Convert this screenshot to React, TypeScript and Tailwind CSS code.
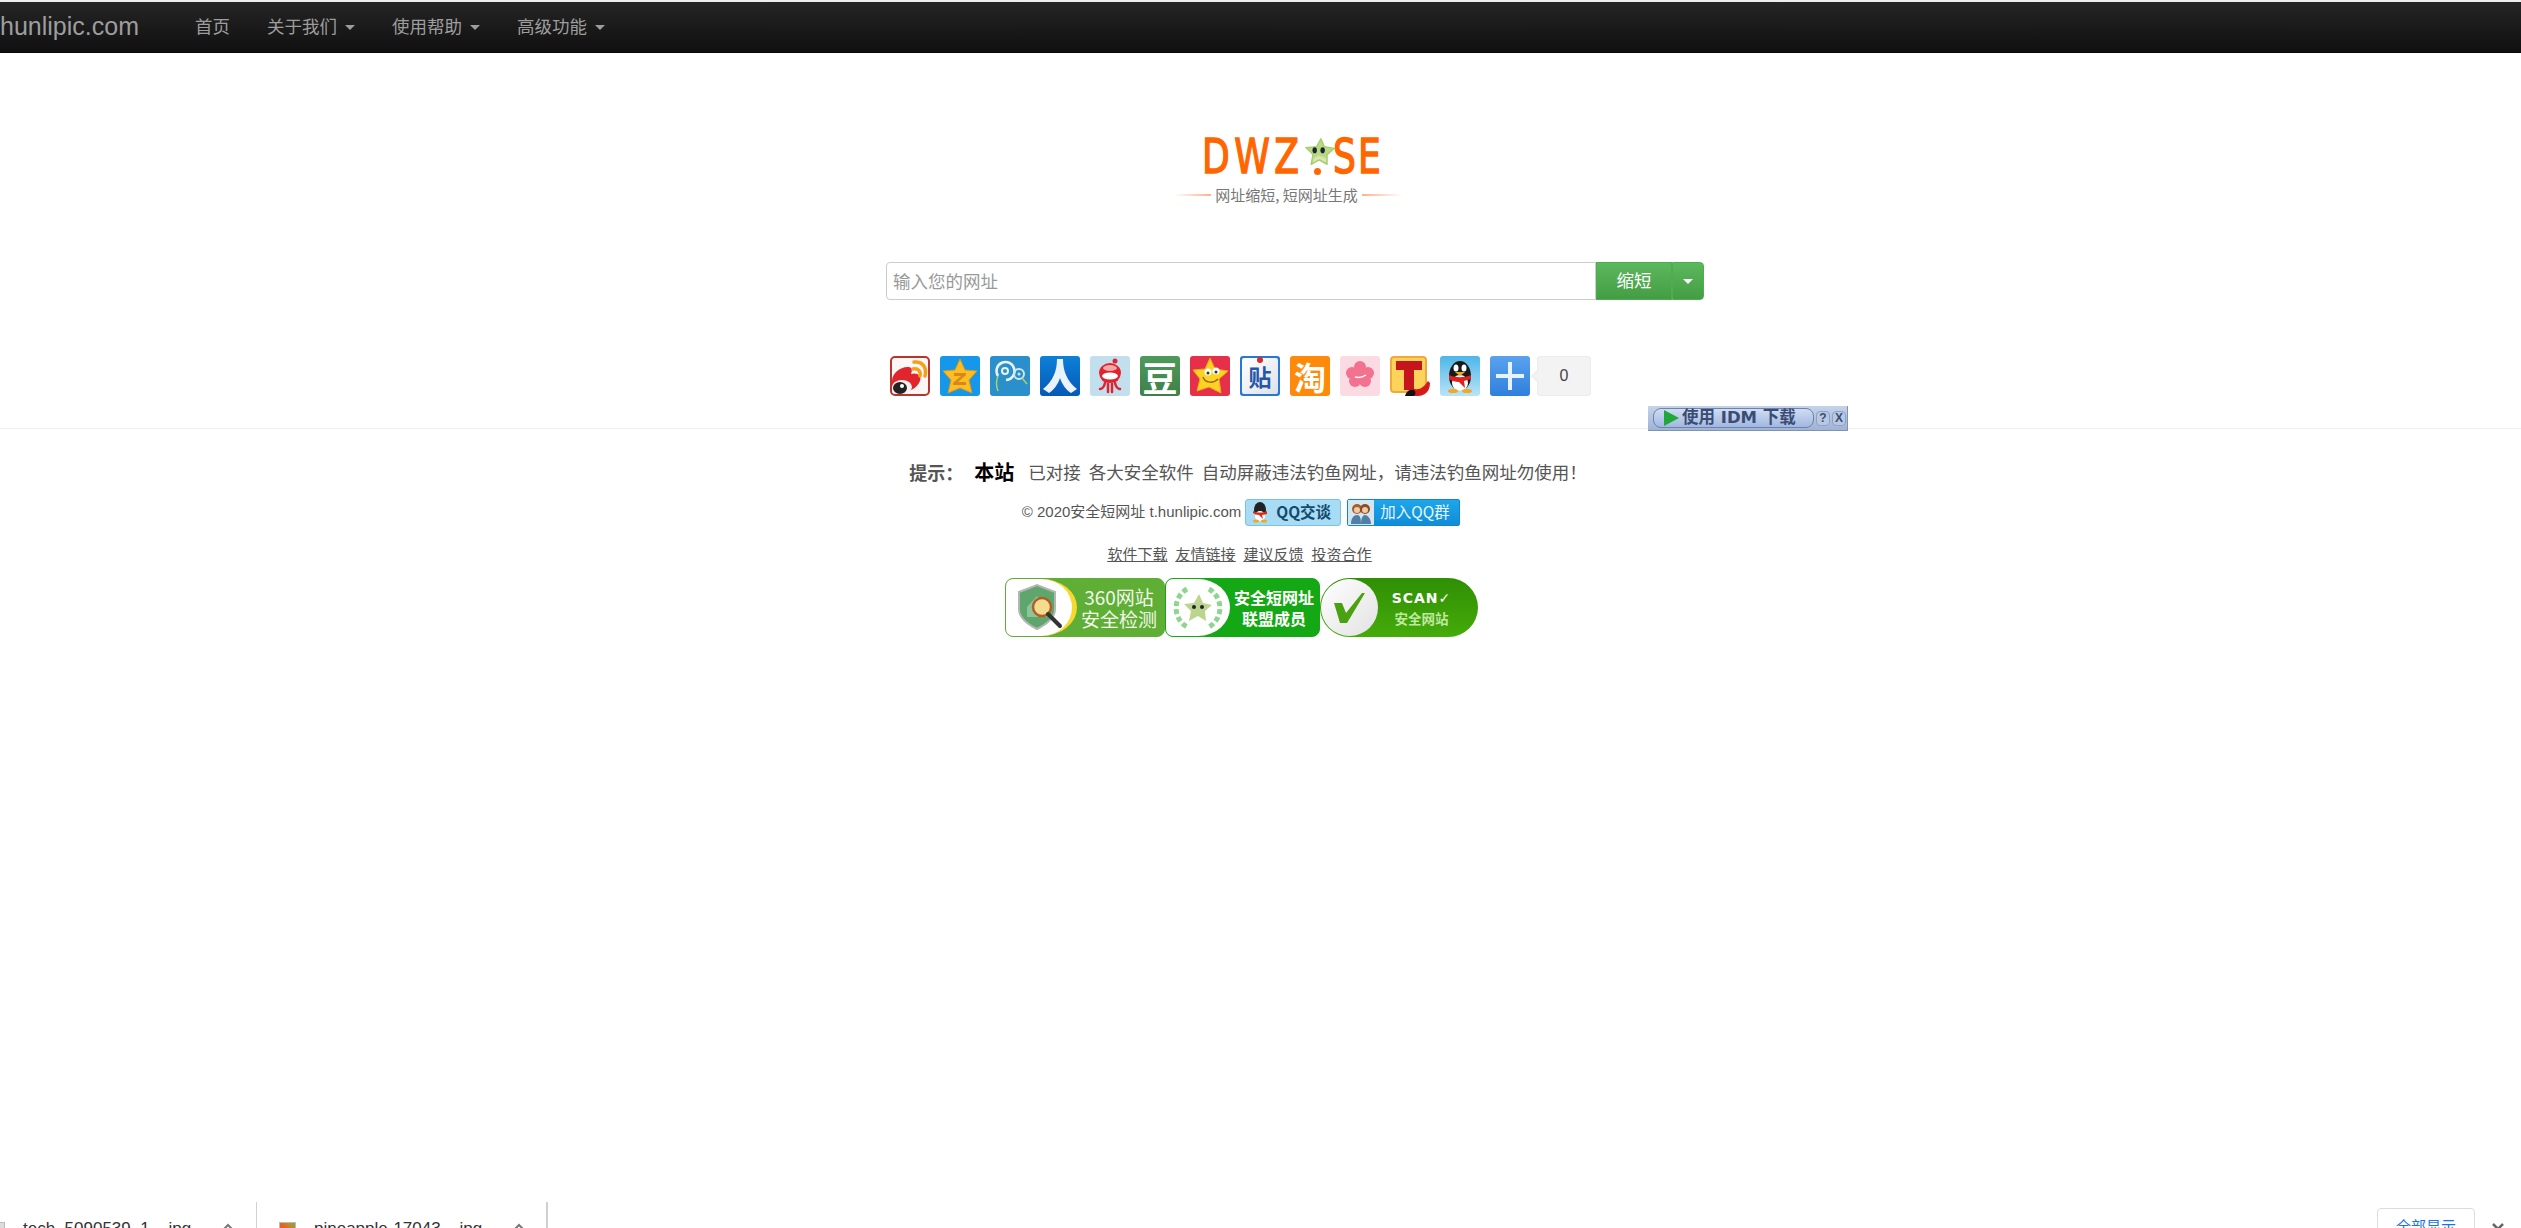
const cjk = '"Noto Sans CJK SC", "Liberation Sans", sans-serif';

const NavMenu = ({ label }: { label: string }) => (
  <a className="flex items-center text-[17.5px] text-[#9d9d9d]">
    {label}
    <span className="ml-2 w-0 h-0 border-x-[5px] border-t-[5px] border-x-transparent border-t-[#9d9d9d]" />
  </a>
);

const Star = ({ size = 30 }: { size?: number }) => (
  <svg width={size} height={size} viewBox="0 0 34 34">
    <path d="M18 2 L22 11 L33 13 L25 20 L25 31 L16 26 L7 31 L9 20 L1 12 L13 11 Z" fill="#b9d985" stroke="#a5cc6e" strokeLinejoin="round" strokeWidth="1.5" />
    <path d="M10 24 L16 21 L24 24 L24 29 L16 25 L9 29 Z" fill="#d6e8ad" />
    <ellipse cx="11" cy="15" rx="2.5" ry="3.5" fill="#1d2433" />
    <ellipse cx="20" cy="15" rx="2.5" ry="3.5" fill="#1d2433" />
  </svg>
);

const Logo = () => (
  <div className="ml-[288px] w-[229px] flex flex-col">
    <div
      className="ml-[28px] h-[38px] flex items-center text-[48px] leading-none text-[#ff6600] [-webkit-text-stroke:1.5px_#ff6600]"
      style={{ fontFamily: '"DejaVu Sans", sans-serif' }}
    >
      <span className="w-[103px] block origin-left scale-x-[0.75] tracking-[6px] whitespace-nowrap">DWZ</span>
      <span className="relative w-[28px] h-[38px] shrink-0">
        <span className="absolute bottom-0 left-[9px] w-[7px] h-[7px] rounded-full bg-[#ff6600]" />
        <span className="absolute top-0 left-0">
          <Star />
        </span>
      </span>
      <span className="w-[50px] block origin-left scale-x-[0.75] tracking-[3px] whitespace-nowrap">SE</span>
    </div>
    <div className="mt-[10px] flex items-center h-[20px] text-[15px] text-[#777]" style={{ fontFamily: cjk }}>
      <span className="w-[38px] h-[2px] bg-gradient-to-r from-white to-[#ffb08a]" />
      <span className="mx-[4px] whitespace-nowrap">网址缩短, 短网址生成</span>
      <span className="w-[42px] h-[2px] bg-gradient-to-l from-white to-[#ffb08a]" />
    </div>
  </div>
);

const Weibo = () => (
  <svg width="40" height="40" viewBox="0 0 40 40">
    <rect x="1" y="1" width="38" height="38" rx="4" fill="#fbf7f5" stroke="#b8352f" strokeWidth="2" />
    <path d="M2 25c0-8 9-15 17-14 4 1 3 4 2 7 6-2 11 2 9 7-3 8-13 12-20 11-5-1-9-5-8-11z" fill="#e0262c" />
    <ellipse cx="12" cy="31" rx="10" ry="7" fill="#f6f0ee" />
    <ellipse cx="10" cy="32" rx="7" ry="6" fill="#222" />
    <circle cx="12" cy="30" r="2" fill="#fff" />
    <path d="M23 13c5-1 8 2 7 7M24 6c9-1 13 6 11 14" fill="none" stroke="#f5a01d" strokeWidth="3.5" strokeLinecap="round" />
  </svg>
);

const QZone = () => (
  <svg width="40" height="40" viewBox="0 0 40 40">
    <rect width="40" height="40" rx="3" fill="#1597ea" />
    <path d="M20 3 L25 14 L37 15 L29 24 L32 37 L20 32 L8 37 L11 24 L3 15 L15 14 Z" fill="#fbbe23" stroke="#e0961a" strokeLinejoin="round" />
    <path d="M14 17h12v2l-8 7h8v3H13v-2l8-7h-7z" fill="#d9861d" />
  </svg>
);

const Tencent = () => (
  <svg width="40" height="40" viewBox="0 0 40 40">
    <rect width="40" height="40" rx="3" fill="#2b8fcb" />
    <path d="M8 20 A9 9 0 1 1 16 24" fill="none" stroke="#e7f3ee" strokeWidth="2.5" />
    <circle cx="15" cy="15" r="3" fill="none" stroke="#e7f3ee" strokeWidth="2" />
    <circle cx="29" cy="18" r="5" fill="none" stroke="#cfe7ef" strokeWidth="2" />
    <circle cx="29" cy="18" r="1.5" fill="#cfe7ef" />
    <path d="M8 20c-2 5-2 10 0 15M32 22l5 6" fill="none" stroke="#a6d36a" strokeWidth="1.5" />
  </svg>
);

const Renren = () => (
  <svg width="40" height="40" viewBox="0 0 40 40">
    <defs>
      <linearGradient id="rr" x1="0" y1="0" x2="0" y2="1">
        <stop offset="0" stopColor="#0d81d8" />
        <stop offset="1" stopColor="#0558b8" />
      </linearGradient>
    </defs>
    <rect width="40" height="40" rx="3" fill="url(#rr)" />
    <path d="M17 3h6c0 12 4 22 14 30l-6 4c-5-3-9-9-11-15-2 6-6 12-11 15l-6-4C13 25 17 15 17 3z" fill="#e9f3fb" />
  </svg>
);

const Kaixin = () => (
  <svg width="40" height="40" viewBox="0 0 40 40">
    <rect width="40" height="40" rx="3" fill="#c2dfee" />
    <path d="M9 17 A11 10 0 0 1 31 17 Q30 27 20 27 Q10 27 9 17Z" fill="#e0242f" />
    <ellipse cx="20" cy="12" rx="7" ry="3" fill="#f3a7a7" />
    <ellipse cx="20" cy="20" rx="8" ry="3.5" fill="#fff" />
    <path d="M15 27c-1 4-3 6-5 6M18 28v8M22 28v8M25 27c1 4 3 6 5 6" fill="none" stroke="#e0242f" strokeWidth="2.5" strokeLinecap="round" />
    <circle cx="25" cy="5" r="2.5" fill="#e0242f" />
  </svg>
);

const Douban = () => (
  <div className="w-10 h-10 rounded-[3px] bg-gradient-to-b from-[#4e9a5b] to-[#3f8049] flex items-center justify-center text-[35px] leading-none text-white font-bold" style={{ fontFamily: cjk }}>
    豆
  </div>
);

const Qing = () => (
  <svg width="40" height="40" viewBox="0 0 40 40">
    <rect width="40" height="40" rx="3" fill="#e6304a" />
    <path d="M20 2 L25 13 L38 15 L29 23 L31 37 L19 31 L7 35 L10 23 L3 14 L15 13 Z" fill="#fbd423" stroke="#f0a81c" strokeLinejoin="round" />
    <circle cx="18" cy="16" r="3.5" fill="#fff" />
    <circle cx="26" cy="15" r="3.5" fill="#fff" />
    <circle cx="18" cy="17" r="1.5" fill="#333" />
    <circle cx="26" cy="16" r="1.5" fill="#333" />
    <path d="M13 21c2 6 10 7 15 2" fill="none" stroke="#a5651a" strokeWidth="1.5" />
  </svg>
);

const Tieba = () => (
  <div className="relative w-10 h-10 rounded-[3px] bg-[#2777d5] p-[2px]">
    <div className="w-full h-full rounded-[2px] bg-gradient-to-br from-white to-[#dde1e8] flex items-center justify-center text-[23px] leading-none font-bold text-[#2656a8]" style={{ fontFamily: cjk }}>
      贴
    </div>
    <span className="absolute top-[1px] left-[17px] w-[6px] h-[6px] rounded-full bg-[#d92a2a]" />
  </div>
);

const Taobao = () => (
  <div className="w-10 h-10 rounded-[3px] bg-[#ff8a0a] flex items-center justify-center text-[32px] leading-none font-bold text-white" style={{ fontFamily: cjk }}>
    淘
  </div>
);

const Flower = () => (
  <svg width="40" height="40" viewBox="0 0 40 40">
    <rect width="40" height="40" rx="3" fill="#fbdbe3" />
    <g fill="#f2728f">
      <circle cx="20" cy="11" r="6" />
      <circle cx="12" cy="17" r="6" />
      <circle cx="28" cy="17" r="6" />
      <circle cx="15" cy="25" r="6" />
      <circle cx="25" cy="25" r="6" />
      <circle cx="20" cy="19" r="7" />
    </g>
    <path d="M15 21c4 1 8 0 11-2" fill="none" stroke="#fff" strokeWidth="1.5" />
  </svg>
);

const TQQ = () => (
  <svg width="40" height="40" viewBox="0 0 40 40">
    <rect x="1" y="1" width="35" height="35" rx="3" fill="#fcd35b" stroke="#f2a93b" strokeWidth="2" />
    <path d="M6 5h26v9h-8v20h-10V14H6z" fill="#c4161c" />
    <path d="M16 40c0-5 5-8 9-7 5 1 9-2 13-8l2 2c0 8-5 13-12 13z" fill="#d61a1a" />
    <path d="M15 40c1-4 5-7 9-6 2 2 2 4 0 6z" fill="#111" />
  </svg>
);

const QQ = () => (
  <svg width="40" height="40" viewBox="0 0 40 40">
    <defs>
      <linearGradient id="qq" x1="0" y1="0" x2="0" y2="1">
        <stop offset="0" stopColor="#4db6e8" />
        <stop offset="1" stopColor="#b9e4f7" />
      </linearGradient>
    </defs>
    <rect width="40" height="40" rx="3" fill="url(#qq)" />
    <ellipse cx="20" cy="20" rx="11" ry="15" fill="#1a1a1a" />
    <ellipse cx="20" cy="27" rx="8" ry="8" fill="#fff" />
    <ellipse cx="16" cy="12" rx="2.5" ry="3.5" fill="#fff" />
    <ellipse cx="24" cy="12" rx="2.5" ry="3.5" fill="#fff" />
    <path d="M15 16h10l-5 4z" fill="#f5a81c" />
    <path d="M9 19c7 3 15 3 22 0v4l-7 2 1 7-6-6c-4 0-8-2-10-3z" fill="#e0201c" />
    <ellipse cx="13" cy="35" rx="5" ry="2" fill="#f5a81c" />
    <ellipse cx="27" cy="35" rx="5" ry="2" fill="#f5a81c" />
  </svg>
);

const Plus = () => (
  <svg width="40" height="40" viewBox="0 0 40 40">
    <defs>
      <linearGradient id="pl" x1="0" y1="0" x2="0" y2="1">
        <stop offset="0" stopColor="#5aa2ee" />
        <stop offset="1" stopColor="#2f7fdc" />
      </linearGradient>
    </defs>
    <rect width="40" height="40" rx="3" fill="url(#pl)" />
    <path d="M18 6h4v12h12v4H22v12h-4V22H6v-4h12z" fill="#e8f2fb" />
  </svg>
);

const Counter = () => (
  <div className="relative ml-[7px] w-[54px] h-10 rounded-[3px] bg-[#f3f3f3] border border-[#ececec] flex items-center justify-center text-[16px] text-[#444]" style={{ fontFamily: '"Liberation Sans", sans-serif' }}>
    <span className="absolute -left-[5px] top-[15px] w-2 h-2 rotate-45 bg-[#f3f3f3] border-l border-b border-[#ececec]" />
    0
  </div>
);

const IdmBar = () => (
  <div className="absolute left-[1648px] top-[406px] w-[200px] h-[25px] bg-gradient-to-b from-[#c5d3ea] to-[#9fb3d6] border-b border-r border-[#7f93b5] flex items-center pl-[5px]">
    <div className="w-[161px] h-[20px] rounded-[8px] bg-gradient-to-b from-[#cfdcf2] to-[#a2b8e0] border border-[#6d82ad] flex items-center pl-[10px] gap-[3px] font-bold text-[#3a4c74] whitespace-nowrap" style={{ fontFamily: '"DejaVu Sans", "Noto Sans CJK SC", sans-serif' }}>
      <svg width="15" height="16" viewBox="0 0 15 16">
        <path d="M0 0 L15 8 L0 16 Z" fill="#22a83a" />
      </svg>
      <span className="text-[16.5px] leading-none">使用 IDM 下载</span>
    </div>
    <span className="ml-[2px] w-[14px] h-[15px] rounded-[4px] bg-[#b9c8e2] border border-[#8ea2c6] text-[12px] leading-[13px] text-center font-bold text-[#3a4c74]">?</span>
    <span className="ml-[2px] w-[14px] h-[15px] rounded-[4px] bg-[#b9c8e2] border border-[#8ea2c6] text-[12px] leading-[13px] text-center font-bold text-[#3a4c74]">X</span>
  </div>
);

const QQChat = () => (
  <div className="ml-[4px] w-[96px] h-[27px] rounded-[3px] bg-[#a8dcf5] border border-[#7cc2e6] flex items-center pl-[4px] gap-[6px] text-[15.5px] font-bold text-[#134a6e] whitespace-nowrap" style={{ fontFamily: cjk }}>
    <svg width="20" height="22" viewBox="0 0 20 22" className="shrink-0">
      <ellipse cx="10" cy="9" rx="6" ry="8" fill="#222" />
      <ellipse cx="10" cy="15" rx="5" ry="5" fill="#fff" />
      <path d="M3 10c4 2 10 2 14 0v3l-5 1 1 4-4-4c-2 0-4-1-6-2z" fill="#d92a1e" />
      <ellipse cx="6" cy="20" rx="3" ry="1.5" fill="#f5a81c" />
      <ellipse cx="14" cy="20" rx="3" ry="1.5" fill="#f5a81c" />
    </svg>
    QQ交谈
  </div>
);

const QQGroup = () => (
  <div className="ml-[6px] w-[113px] h-[27px] rounded-[2px] bg-gradient-to-b from-[#1ea6ea] to-[#0e8dd8] flex items-center text-[15.5px] text-[#e8f6ff] border border-[#1287cf] whitespace-nowrap" style={{ fontFamily: cjk }}>
    <span className="w-[26px] h-full shrink-0 bg-[#d5e6ef] flex items-center justify-center mr-[6px]">
      <svg width="22" height="24" viewBox="0 0 22 24">
        <circle cx="7" cy="9" r="5" fill="#a0612f" />
        <circle cx="15" cy="9" r="5" fill="#8a4d22" />
        <circle cx="7" cy="10" r="3" fill="#f3c9a5" />
        <circle cx="15" cy="10" r="3" fill="#f3c9a5" />
        <path d="M1 24c0-6 3-9 6-9s4 3 4 9zM11 24c0-6 2-9 4-9s6 3 6 9z" fill="#4f7fa8" />
      </svg>
    </span>
    加入QQ群
  </div>
);

const Badge360 = () => (
  <div className="w-[160px] h-[59px] rounded-[8px] bg-[#5fae35] border border-[#5fae35] flex items-center overflow-hidden" style={{ fontFamily: cjk }}>
    <div className="w-[71px] shrink-0 h-full bg-white rounded-r-[50%] border-r-[5px] border-[#f7d92e] flex items-center pl-[9px]">
      <svg width="50" height="50" viewBox="0 0 50 50">
        <path d="M4 9 L22 2 L40 9 V26 C40 36 30 42 22 46 C14 42 4 36 4 26 Z" fill="#5ea66b" stroke="#b5b5b5" strokeWidth="2" />
        <path d="M12 24 L22 13 L32 24 V34 H12 Z" fill="#8cc596" />
        <circle cx="27" cy="24" r="9" fill="#f3dc8e" stroke="#b45d2a" strokeWidth="2.5" />
        <path d="M33 31 L45 43" stroke="#333" strokeWidth="4" strokeLinecap="round" />
      </svg>
    </div>
    <div className="flex-1 flex flex-col items-center text-[19px] leading-[22px] text-[#f1f8ea] pr-[2px] whitespace-nowrap">
      <span>360网站</span>
      <span>安全检测</span>
    </div>
  </div>
);

const BadgeMember = () => (
  <div className="w-[155px] h-[59px] rounded-[8px] bg-[#15a815] border border-[#15a815] flex items-center overflow-hidden" style={{ fontFamily: cjk }}>
    <div className="w-[64px] shrink-0 h-full bg-white rounded-r-[50%] flex items-center pl-[7px]">
      <svg width="50" height="50" viewBox="0 0 50 50">
        <path d="M14 6 A22 22 0 0 0 14 44 M36 6 A22 22 0 0 1 36 44" fill="none" stroke="#8ed68f" strokeWidth="5" strokeDasharray="5 3" />
        <path d="M26 11 L30 20 L39 22 L32 28 L33 38 L25 33 L16 38 L18 28 L11 21 L21 20 Z" fill="#bcd58e" />
        <circle cx="21" cy="24" r="2" fill="#223" />
        <circle cx="29" cy="24" r="2" fill="#223" />
      </svg>
    </div>
    <div className="flex-1 flex flex-col items-center text-[16px] leading-[21px] font-bold text-white whitespace-nowrap">
      <span>安全短网址</span>
      <span>联盟成员</span>
    </div>
  </div>
);

const BadgeScan = () => (
  <div className="w-[158px] h-[59px] rounded-full bg-gradient-to-b from-[#2f8f05] to-[#45ab0a] flex items-center" style={{ fontFamily: cjk }}>
    <div className="w-[57px] h-[57px] ml-[1px] rounded-full bg-gradient-to-br from-white to-[#e2e2e2] flex items-center justify-center">
      <svg width="34" height="34" viewBox="0 0 34 34">
        <path d="M2 12 L10 12 L14 22 L30 2 L33 2 L15 32 L8 32 Z" fill="#4aa112" />
      </svg>
    </div>
    <div className="flex-1 flex flex-col items-center pr-[12px]">
      <span className="text-[14px] leading-[20px] font-bold text-white tracking-[1px]" style={{ fontFamily: '"DejaVu Sans", sans-serif' }}>SCAN✓</span>
      <span className="text-[13.5px] leading-[20px] font-bold text-[#bfe8a0]">安全网站</span>
    </div>
  </div>
);

const ChevronUp = () => (
  <svg width="14" height="8" viewBox="0 0 14 8" className="shrink-0">
    <path d="M2 7 L7 2 L12 7" fill="none" stroke="#777" strokeWidth="2" />
  </svg>
);

const DownloadItem = ({ name, icon, edge }: { name: string; icon: string; edge: string }) => (
  <div className={`w-[291px] shrink-0 flex items-start pl-[22px] pt-[18px] border-[#d0d0d0] text-[17px] leading-[18px] text-[#333] ${edge}`}>
    <span className={`w-[17px] h-[17px] shrink-0 mt-[2px] border border-[#bbb] ${icon}`} />
    <span className="ml-[18px] w-[184px] whitespace-nowrap">{name}</span>
    <span className="ml-[14px] mt-[3px]">
      <ChevronUp />
    </span>
  </div>
);

export default function App() {
  return (
    <div className="relative h-[1228px] overflow-hidden bg-white flex flex-col" style={{ fontFamily: '"Liberation Sans", "Noto Sans CJK SC", sans-serif' }}>
      <div className="h-[2px] bg-[#eeeeee]" />
      <nav className="h-[51px] shrink-0 flex items-center bg-gradient-to-b from-[#252525] to-[#101010] border-b border-[#080808]">
        <a className="text-[25px] text-[#9d9d9d] w-[138px]">hunlipic.com</a>
        <div className="ml-[57px] flex items-center gap-[37px]">
          <a className="text-[17.5px] text-[#9d9d9d]">首页</a>
          <NavMenu label="关于我们" />
          <NavMenu label="使用帮助" />
          <NavMenu label="高级功能" />
        </div>
      </nav>

      <section className="h-[376px] shrink-0 border-b border-[#eeeeee] pl-[886px] pt-[84px]">
        <div className="w-[818px]">
          <Logo />
          <div className="mt-[57px] flex h-[38px]">
            <input
              placeholder="输入您的网址"
              className="w-[710px] h-full px-[6px] pb-[2px] text-[17.5px] border border-[#cccccc] rounded-l-[4px] outline-none placeholder:text-[#999]"
              style={{ fontFamily: cjk }}
            />
            <button className="w-[76px] h-full pb-[2px] bg-gradient-to-b from-[#5cb85c] to-[#449d44] text-white text-[17.5px] border border-[#4cae4c]" style={{ fontFamily: cjk }}>
              缩短
            </button>
            <button className="w-[32px] h-full rounded-r-[4px] bg-gradient-to-b from-[#5cb85c] to-[#449d44] border border-[#4cae4c] flex items-center justify-center">
              <span className="w-0 h-0 border-x-[5px] border-t-[5px] border-x-transparent border-t-white" />
            </button>
          </div>
        </div>
        <div className="ml-[4px] mt-[56px] flex items-center gap-[10px]">
          <Weibo />
          <QZone />
          <Tencent />
          <Renren />
          <Kaixin />
          <Douban />
          <Qing />
          <Tieba />
          <Taobao />
          <Flower />
          <TQQ />
          <QQ />
          <Plus />
          <div className="-ml-[10px]">
            <Counter />
          </div>
        </div>
      </section>
      <IdmBar />

      <footer className="pr-[39px] flex flex-col items-center text-[#555]">
        <p className="mt-[31px] ml-[14px] h-[24px] flex items-center text-[17.5px] leading-[24px] whitespace-nowrap" style={{ fontFamily: cjk }}>
          <b className="font-bold text-[18px]">提示：</b>
          <b className="ml-[11px] font-bold text-black text-[20px]">本站</b>
          <span className="ml-[14px]">已对接</span>
          <span className="ml-[8px]">各大安全软件</span>
          <span className="ml-[8px]">自动屏蔽违法钓鱼网址，请违法钓鱼网址勿使用！</span>
        </p>
        <div className="mt-[14px] flex items-center text-[15px] h-[28px]">
          <span className="whitespace-nowrap">© 2020安全短网址 t.hunlipic.com</span>
          <QQChat />
          <QQGroup />
        </div>
        <div className="mt-[18px] -ml-[3px] flex gap-[8px] text-[15px] leading-[20px] underline text-[#555]" style={{ fontFamily: cjk }}>
          <a>软件下载</a>
          <a>友情链接</a>
          <a>建议反馈</a>
          <a>投资合作</a>
        </div>
        <div className="mt-[14px] flex">
          <Badge360 />
          <BadgeMember />
          <BadgeScan />
        </div>
      </footer>

      <div className="mt-auto h-[26px] shrink-0 overflow-hidden flex items-start bg-white relative">
        <div className="flex -ml-[34px]">
          <DownloadItem name="tech_5090539_1....jpg" icon="bg-[#dddddd]" edge="border-r" />
          <DownloadItem name="pineapple-17043....jpg" icon="bg-gradient-to-tr from-[#e8601c] via-[#e8601c] to-[#7aa83a]" edge="border-r-2" />
        </div>
        <div className="ml-auto flex items-start">
          <button className="w-[98px] h-[40px] rounded-[4px] border border-[#dadce0] text-[15px] text-[#1a73e8] mt-[6px] pb-[4px]" style={{ fontFamily: cjk }}>
            全部显示
          </button>
          <svg width="14" height="8" viewBox="0 0 14 8" className="mt-[21px] ml-[16px] mr-[16px]">
            <path d="M2 1 L7 6 L12 1" fill="none" stroke="#666" strokeWidth="2.5" />
          </svg>
        </div>
      </div>
    </div>
  );
}
